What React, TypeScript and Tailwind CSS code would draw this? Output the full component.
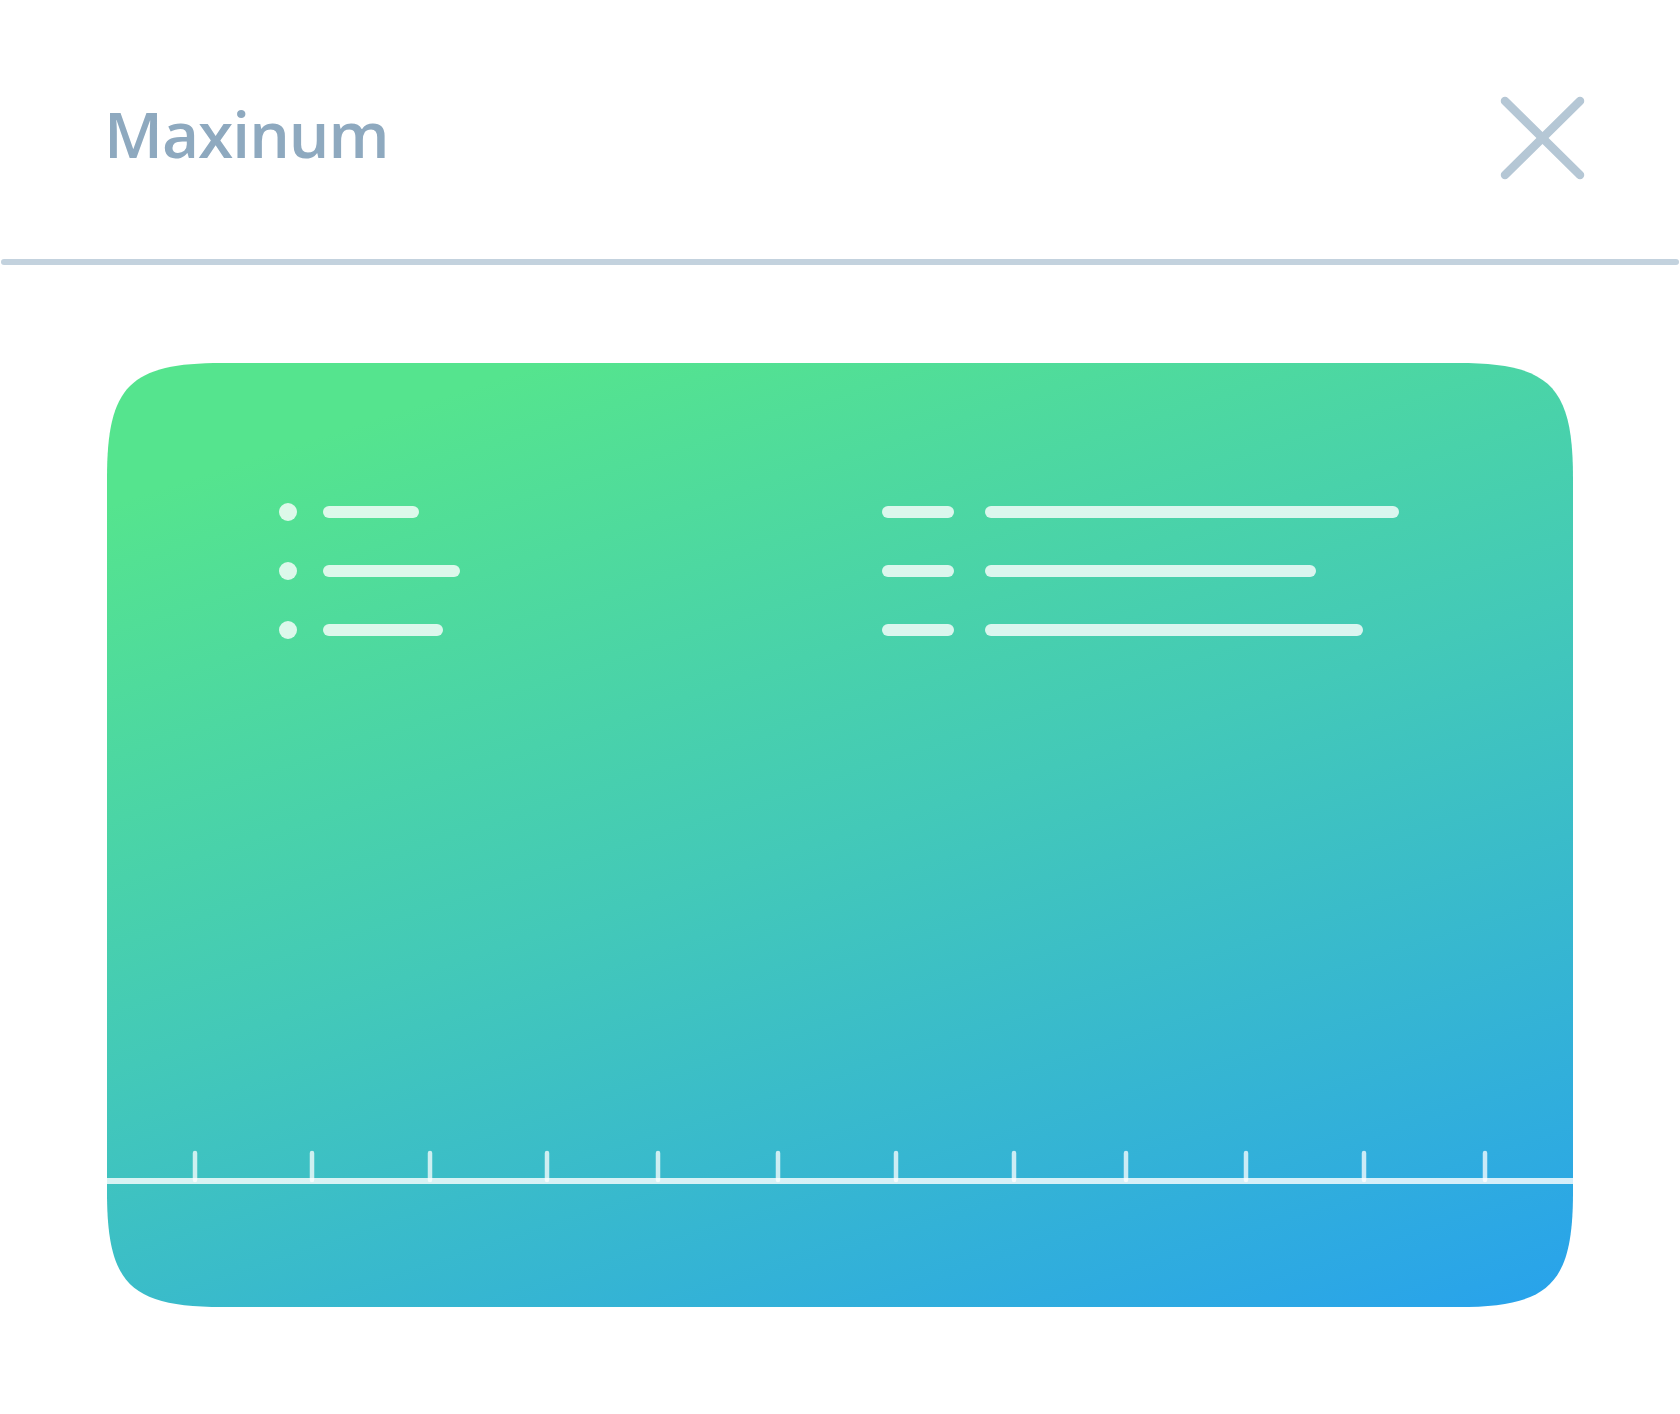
import React from 'react'

const leftRows = [96, 137, 120]
const rightRows = [414, 331, 378]
const ticks = [88, 205, 323, 440, 551, 671, 789, 907, 1019, 1139, 1257, 1378]

function CloseIcon() {
  return (
    <svg width="85" height="84" viewBox="0 0 85 84" className="mt-[96px] mr-[95px] shrink-0">
      <g stroke="#b5c7d5" strokeWidth="8.5" strokeLinecap="round">
        <line x1="5" y1="5" x2="80" y2="79" />
        <line x1="80" y1="5" x2="5" y2="79" />
      </g>
    </svg>
  )
}

function Ruler() {
  return (
    <svg width="1466" height="36" viewBox="0 0 1466 36" className="block">
      <rect x="0" y="29" width="1466" height="6" fill="rgba(255,255,255,0.8)" />
      {ticks.map(x => (
        <line
          key={x}
          x1={x}
          y1="4"
          x2={x}
          y2="31"
          stroke="rgba(255,255,255,0.75)"
          strokeWidth="4.5"
          strokeLinecap="round"
        />
      ))}
    </svg>
  )
}

export default function App() {
  return (
    <div className="w-[1680px] min-h-[1414px] bg-white flex flex-col">
      {/* Header */}
      <div className="h-[259px] flex justify-between items-start">
        <h1
          className="pl-[104px] pt-[102px] text-[64px] leading-none font-semibold tracking-[-1px] text-[#8ea9bf]"
          style={{ fontFamily: '"Open Sans", sans-serif' }}
        >
          Maxinum
        </h1>
        <CloseIcon />
      </div>
      <div className="h-[6px] mx-[1px] rounded-full bg-[#c3d2de]" />

      {/* Card */}
      <div className="mt-[98px] mx-[107px] mb-[107px] h-[944px] overflow-hidden flex flex-col bg-[linear-gradient(162deg,#55e48e_10%,#43c9b8_50%,#28a2ec_100%)] [clip-path:path('M115,0_L1351,0_C1443,0_1466,23_1466,115_L1466,829_C1466,921_1443,944_1351,944_L115,944_C23,944_0,921_0,829_L0,115_C0,23_23,0_115,0_Z')]">
        <div className="flex pt-[140px] pl-[172px]">
          <div className="w-[603px] flex flex-col gap-[41px]">
            {leftRows.map((w, i) => (
              <div key={i} className="flex items-center h-[18px]">
                <div className="w-[18px] h-[18px] rounded-full bg-white/80" />
                <div className="ml-[26px] h-[12px] rounded-full bg-white/80" style={{ width: w }} />
              </div>
            ))}
          </div>
          <div className="flex flex-col gap-[41px]">
            {rightRows.map((w, i) => (
              <div key={i} className="flex items-center h-[18px]">
                <div className="w-[72px] h-[12px] rounded-full bg-white/80" />
                <div className="ml-[31px] h-[12px] rounded-full bg-white/80" style={{ width: w }} />
              </div>
            ))}
          </div>
        </div>
        <div className="flex-1" />
        <Ruler />
        <div className="h-[122px]" />
      </div>
    </div>
  )
}
